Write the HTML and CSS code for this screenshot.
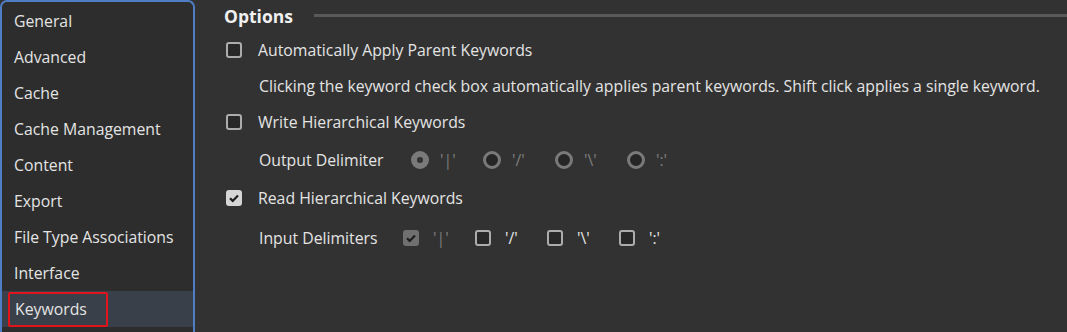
FILE: index.html
```html
<!DOCTYPE html>
<html lang="en">
<head>
    <meta charset="UTF-8">
    <meta name="viewport" content="width=device-width, initial-scale=1.0">
    <title>Preferences - Keywords</title>
    <link rel="stylesheet" href="styles.css">
</head>
<body>
    <div class="prefs">
        <nav class="sidebar">
            <div class="nav-item">General</div>
            <div class="nav-item">Advanced</div>
            <div class="nav-item">Cache</div>
            <div class="nav-item">Cache Management</div>
            <div class="nav-item">Content</div>
            <div class="nav-item">Export</div>
            <div class="nav-item">File Type Associations</div>
            <div class="nav-item">Interface</div>
            <div class="nav-item selected"><span class="marked">Keywords</span></div>
        </nav>

        <main class="panel">
            <div class="section-head">
                <h2>Options</h2>
                <div class="rule"></div>
            </div>

            <label class="option">
                <span class="check"></span>
                Automatically Apply Parent Keywords
            </label>
            <p class="hint">Clicking the keyword check box automatically applies parent keywords. Shift click applies a single keyword.</p>

            <label class="option">
                <span class="check"></span>
                Write Hierarchical Keywords
            </label>
            <div class="sub-row">
                <span class="sub-label">Output Delimiter</span>
                <div class="choices">
                    <span class="choice dim"><span class="radio on"></span>'|'</span>
                    <span class="choice dim"><span class="radio"></span>'/'</span>
                    <span class="choice dim"><span class="radio"></span>'\'</span>
                    <span class="choice dim"><span class="radio"></span>':'</span>
                </div>
            </div>

            <label class="option">
                <span class="check checked">
                    <svg viewBox="0 0 16 16"><path d="M4 8.2l2.7 2.7L12 5.4" /></svg>
                </span>
                Read Hierarchical Keywords
            </label>
            <div class="sub-row inputs">
                <span class="sub-label">Input Delimiters</span>
                <div class="choices">
                    <span class="choice dim"><span class="check checked disabled"><svg viewBox="0 0 16 16"><path d="M4 8.2l2.7 2.7L12 5.4" /></svg></span>'|'</span>
                    <span class="choice"><span class="check"></span>'/'</span>
                    <span class="choice"><span class="check"></span>'\'</span>
                    <span class="choice"><span class="check"></span>':'</span>
                </div>
            </div>
        </main>
    </div>
</body>
</html>
```

FILE: styles.css
```css
html, body {
    margin: 0;
    height: 100%;
}
body {
    font-family: "Open Sans", "Noto Sans", Arial, sans-serif;
    font-size: 15.8px;
    background: #323232;
    color: #e4e4e4;
    overflow: hidden;
}
.prefs {
    display: flex;
    height: 100%;
}
.sidebar {
    width: 191px;
    flex-shrink: 0;
    height: 330px;
    background: #2d2d2d;
    border: 2px solid #4f7ec4;
    border-bottom: none;
    border-radius: 7px 7px 0 0;
    padding-top: 1px;
}
.nav-item {
    height: 36px;
    line-height: 36px;
    padding-left: 12px;
    white-space: nowrap;
}
.nav-item.selected {
    background: #3a4049;
}
.marked {
    display: inline-block;
    line-height: 31px;
    margin-left: -6px;
    padding: 0 19px 0 5px;
    border: 2px solid #e0141a;
    border-radius: 2px;
}
.panel {
    flex: 1;
    padding: 4px 0 0 29px;
}
.section-head {
    display: flex;
    align-items: center;
    height: 24px;
    margin-bottom: 4px;
}
.section-head h2 {
    margin: 0;
    font-size: 17.5px;
    font-weight: bold;
    color: #f0f0f0;
}
.rule {
    flex: 1;
    height: 3px;
    margin: 0 0 2px 21px;
    background: #595959;
}
.option {
    display: flex;
    align-items: center;
    height: 36px;
    gap: 16px;
    margin-left: 2px;
}
.check {
    width: 12px;
    height: 12px;
    border: 2px solid #acacac;
    border-radius: 3px;
    background: #282828;
    display: inline-flex;
    flex-shrink: 0;
}
.check svg {
    width: 16px;
    height: 16px;
    margin: -2px;
    fill: none;
    stroke: #1e1e1e;
    stroke-width: 2.2;
}
.check.checked {
    background: #d6d6d6;
    border-color: #d6d6d6;
}
.check.disabled {
    background: #707070;
    border-color: #707070;
}
.hint {
    margin: 0 0 0 35px;
    height: 36px;
    line-height: 36px;
    white-space: nowrap;
}
.sub-row {
    display: flex;
    align-items: center;
    height: 40px;
    padding-left: 35px;
}
.sub-row.inputs {
    margin-top: 2px;
}
.sub-label {
    width: 152px;
}
.inputs .sub-label {
    width: 144px;
}
.choices {
    display: flex;
}
.choice {
    display: flex;
    align-items: center;
    gap: 11px;
    width: 72px;
}
.inputs .choice {
    gap: 14px;
}
.choice.dim {
    color: #7d7d7d;
}
.radio {
    width: 12px;
    height: 12px;
    border: 3px solid #7a7a7a;
    border-radius: 50%;
    background: #262626;
    flex-shrink: 0;
}
.radio.on {
    background: #262626;
    border-width: 6px;
    width: 0;
    height: 0;
    padding: 3px;
    box-sizing: content-box;
    background-clip: content-box;
}
```
